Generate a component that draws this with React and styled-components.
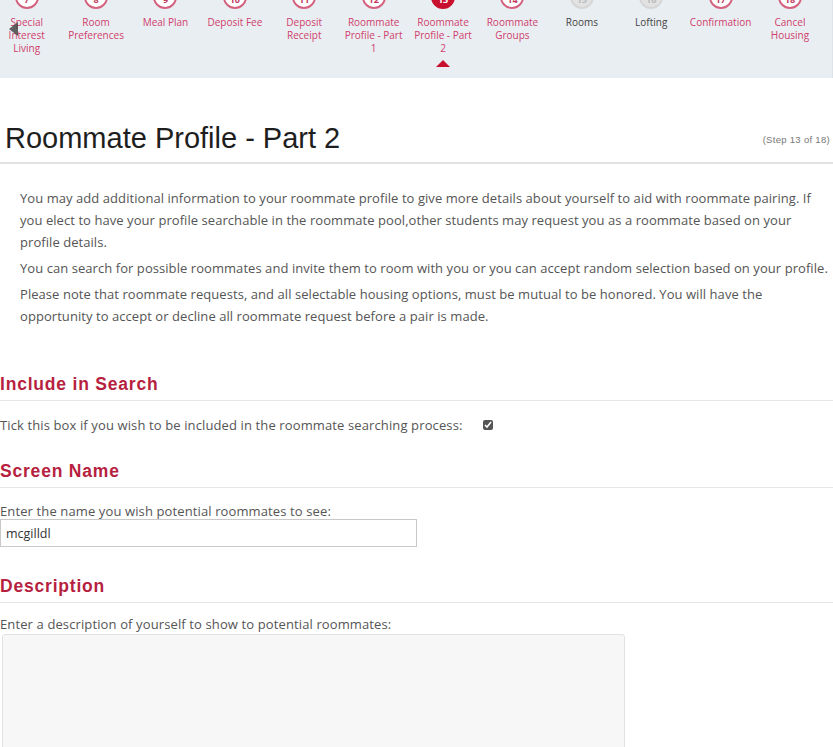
import React from "react";
import styled, { createGlobalStyle, css } from "styled-components";

const Global = createGlobalStyle`
  html, body { margin: 0; padding: 0; background: #fff; }
  body { font-family: "Open Sans", "Liberation Sans", Arial, sans-serif; overflow: hidden; }
`;

const Page = styled.div`
  width: 833px;
  min-height: 747px;
`;

const Nav = styled.nav`
  position: relative;
  height: 78px;
  background: #e9eef3;
  overflow: hidden;
  border-right: 1px solid #dde3e8;
  box-sizing: border-box;
`;

const NavRow = styled.ol`
  list-style: none;
  display: flex;
  margin: -15px 0 0 -8px;
  padding: 0;
`;

const NavItem = styled.li`
  flex: 0 0 69.4px;
  display: flex;
  flex-direction: column;
  align-items: center;
`;

const Circle = styled.span`
  width: 24px;
  height: 24px;
  box-sizing: border-box;
  border-radius: 50%;
  border: 2px solid #d4627f;
  background: #fff;
  color: #c23a5d;
  font-size: 9px;
  font-weight: bold;
  display: flex;
  align-items: flex-end;
  justify-content: center;
  line-height: 14px;
  ${(p) =>
    p.$state === "active" &&
    css`
      background: #c8102e;
      border-color: #c8102e;
      color: #fff;
    `}
  ${(p) =>
    p.$state === "disabled" &&
    css`
      background: #e2e2e2;
      border-color: #d6d6d6;
      color: #bbb;
    `}
`;

const NavLabel = styled.span`
  margin-top: 7px;
  max-width: 63px;
  font-size: 10px;
  line-height: 13px;
  text-align: center;
  color: ${(p) => (p.$disabled ? "#444" : "#d0406a")};
`;

const Caret = styled.span`
  margin-top: 5px;
  width: 0;
  height: 0;
  border-left: 7px solid transparent;
  border-right: 7px solid transparent;
  border-bottom: 7px solid #c8102e;
`;

const PrevArrow = styled.span`
  position: absolute;
  left: 9px;
  top: 22px;
  width: 0;
  height: 0;
  border-top: 7px solid transparent;
  border-bottom: 7px solid transparent;
  border-right: 9px solid rgba(70, 70, 70, 0.85);
`;

const Header = styled.header`
  display: flex;
  justify-content: space-between;
  align-items: flex-end;
  margin-top: 43px;
  padding: 0 3px 7px 5px;
  border-bottom: 2px solid #e2e2e2;
`;

const Title = styled.h1`
  margin: 0;
  font-family: "Liberation Sans", Arial, sans-serif;
  font-weight: normal;
  font-size: 29px;
  line-height: 34px;
  color: #1e1e1e;
`;

const StepCount = styled.span`
  font-family: "Liberation Sans", Arial, sans-serif;
  font-size: 9.5px;
  letter-spacing: 0.3px;
  color: #777;
  margin-bottom: 10px;
`;

const Intro = styled.div`
  padding: 23px 0 0 20px;
`;

const Para = styled.p`
  margin: 0 0 4px;
  font-size: 13px;
  letter-spacing: 0.06px;
  line-height: 22px;
  color: #555;
`;

const Section = styled.section`
  margin-top: ${(p) => p.$top}px;
`;

const SectionTitle = styled.h2`
  margin: 0;
  padding-bottom: 6px;
  font-family: "Liberation Sans", Arial, sans-serif;
  font-size: 17.5px;
  line-height: 20px;
  letter-spacing: 0.8px;
  font-weight: bold;
  color: #b71f3f;
  border-bottom: 1px solid #e6e6e6;
`;

const FieldText = styled.div`
  font-size: 13px;
  letter-spacing: 0.12px;
  line-height: 16px;
  color: #555;
  margin-top: ${(p) => p.$top}px;
  display: flex;
  align-items: center;
`;

const Check = styled.input`
  margin: 0 0 0 20px;
  width: 10px;
  height: 10px;
  accent-color: #555;
`;

const TextInput = styled.input`
  display: block;
  width: 417px;
  height: 28px;
  box-sizing: border-box;
  margin-top: 0;
  border: 1px solid #c9c9c9;
  padding: 0 5px;
  font-family: "Open Sans", sans-serif;
  font-size: 12.5px;
  color: #333;
  outline: none;
`;

const TextArea = styled.textarea`
  display: block;
  width: 623px;
  height: 160px;
  margin: 2px 0 0 2px;
  box-sizing: border-box;
  background: #f7f7f7;
  border: 1px solid #e2e2e2;
  border-radius: 3px;
  resize: none;
  font-family: "Open Sans", sans-serif;
`;

const steps = [
  { n: 7, label: "Special Interest Living" },
  { n: 8, label: "Room Preferences" },
  { n: 9, label: "Meal Plan" },
  { n: 10, label: "Deposit Fee" },
  { n: 11, label: "Deposit Receipt" },
  { n: 12, label: "Roommate Profile - Part 1" },
  { n: 13, label: "Roommate Profile - Part 2", state: "active" },
  { n: 14, label: "Roommate Groups" },
  { n: 15, label: "Rooms", state: "disabled" },
  { n: 16, label: "Lofting", state: "disabled" },
  { n: 17, label: "Confirmation" },
  { n: 18, label: "Cancel Housing" },
];

export default function App() {
  return (
    <Page>
      <Global />
      <Nav>
        <NavRow>
          {steps.map((s) => (
            <NavItem key={s.n}>
              <Circle $state={s.state}>{s.n}</Circle>
              <NavLabel $disabled={s.state === "disabled"}>{s.label}</NavLabel>
              {s.state === "active" && <Caret />}
            </NavItem>
          ))}
        </NavRow>
        <PrevArrow />
      </Nav>

      <Header>
        <Title>Roommate Profile - Part 2</Title>
        <StepCount>(Step 13 of 18)</StepCount>
      </Header>

      <Intro>
        <Para>
          You may add additional information to your roommate profile to give more details about
          yourself to aid with roommate pairing. If you elect to have your profile searchable in the
          roommate pool,other students may request you as a roommate based on your profile details.
        </Para>
        <Para>
          You can search for possible roommates and invite them to room with you or you can accept
          random selection based on your profile.
        </Para>
        <Para>
          Please note that roommate requests, and all selectable housing options, must be mutual to
          be honored. You will have the opportunity to accept or decline all roommate request before
          a pair is made.
        </Para>
      </Intro>

      <Section $top={47}>
        <SectionTitle>Include in Search</SectionTitle>
        <FieldText $top={16}>
          Tick this box if you wish to be included in the roommate searching process:
          <Check type="checkbox" defaultChecked />
        </FieldText>
      </Section>

      <Section $top={28}>
        <SectionTitle>Screen Name</SectionTitle>
        <FieldText $top={15}>Enter the name you wish potential roommates to see:</FieldText>
        <TextInput defaultValue="mcgilldl" />
      </Section>

      <Section $top={29}>
        <SectionTitle>Description</SectionTitle>
        <FieldText $top={13}>Enter a description of yourself to show to potential roommates:</FieldText>
        <TextArea />
      </Section>
    </Page>
  );
}
